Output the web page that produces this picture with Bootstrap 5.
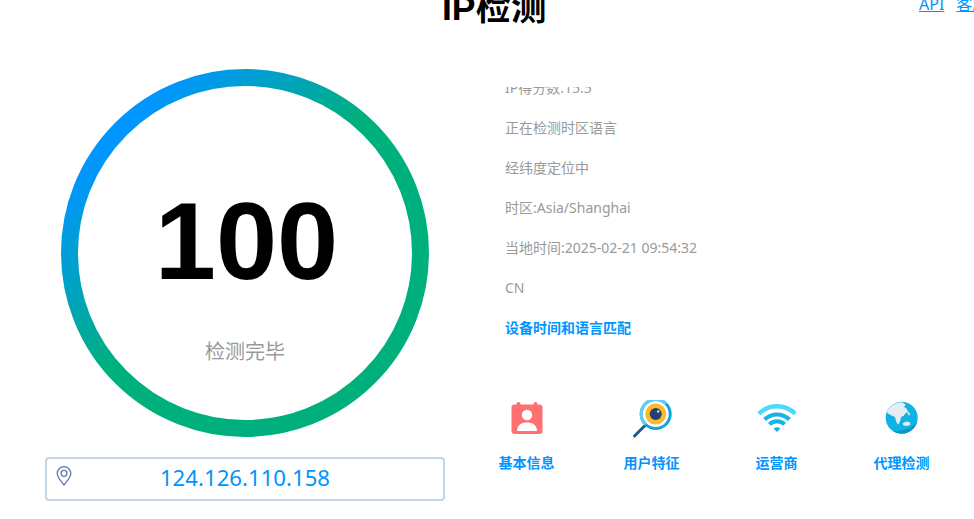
<!DOCTYPE html>
<html lang="zh-CN">
<head>
  <meta charset="UTF-8">
  <title>IP检测</title>
  <meta name="viewport" content="width=device-width, initial-scale=1">
  <link href="https://cdn.jsdelivr.net/npm/bootstrap@5.3.0/dist/css/bootstrap.min.css" rel="stylesheet">
  <style>
    html, body {
      height: 519px;
      overflow: hidden;
    }

    body {
      background: #fff;
      font-family: "Noto Sans", "Noto Sans CJK SC", sans-serif;
    }

    .page-head {
      height: 69px;
      margin-top: -12px;
      white-space: nowrap;
    }

    .page-title {
      margin: 0 0 0 442px;
      width: 104px;
      font-family: "Liberation Sans", "Noto Sans CJK SC", sans-serif;
      font-size: 35.5px;
      line-height: 40px;
      font-weight: 700;
      color: #000;
      flex-shrink: 0;
    }

    .head-links {
      margin-left: 373px;
      padding-top: 5px;
      gap: 12px;
      flex-shrink: 0;
    }

    .head-links a {
      font-size: 16px;
      line-height: 22px;
      color: #0094ff;
    }

    .left-col {
      width: 490px;
      padding-top: 12px;
      flex-shrink: 0;
    }

    .ring-wrap {
      width: 368px;
      height: 368px;
      margin-left: 61px;
      padding-top: 118px;
    }

    .ring-svg {
      position: absolute;
      top: 0;
      left: 0;
    }

    .score-num {
      font-family: "Liberation Sans", sans-serif;
      font-size: 110px;
      line-height: 108px;
      font-weight: 700;
      color: #000;
      padding-left: 3px;
    }

    .score-text {
      font-family: "Noto Sans CJK SC", sans-serif;
      font-size: 20px;
      line-height: 28px;
      color: #999;
      margin-top: 42px;
    }

    .ip-box {
      width: 400px;
      height: 44px;
      margin: 20px 0 0 45px;
      border: 2px solid #c3d3e8;
      border-radius: 4px;
    }

    .ip-pin {
      position: absolute;
      left: 9px;
      top: 7px;
    }

    .ip-text {
      font-size: 22.2px;
      line-height: 38px;
      color: #0094ff;
    }

    .log-box {
      height: 267px;
      margin-top: 30px;
      padding-left: 15px;
      overflow: hidden;
    }

    .log-list {
      margin-top: -9px;
      font-size: 14px;
      line-height: 20px;
      color: #999;
    }

    .log-list div {
      margin-bottom: 20px;
    }

    .log-list .log-ok {
      color: #0094ff;
      font-weight: 700;
    }

    .tool-row {
      width: 500px;
      margin: 46px 0 0 -26px;
    }

    .tool-item {
      width: 125px;
      text-align: center;
      font-size: 14px;
      line-height: 20px;
      font-weight: 700;
      color: #0094ff;
    }

    .tool-item svg {
      display: block;
      margin: 0 auto 13px;
    }
  </style>
</head>
<body>

  <header class="page-head d-flex">
    <h1 class="page-title">IP检测</h1>
    <div class="head-links d-flex">
      <a href="#">API</a>
      <a href="#">客服</a>
    </div>
  </header>

  <main class="d-flex">
    <!-- score -->
    <section class="left-col">
      <div class="ring-wrap position-relative text-center">
        <svg class="ring-svg" width="368" height="368" viewBox="0 0 368 368">
          <defs>
            <linearGradient id="ringGrad" x1="0.15" y1="0.15" x2="0.47" y2="0.47">
              <stop offset="0" stop-color="#0096ff"/>
              <stop offset="1" stop-color="#00b07c"/>
            </linearGradient>
          </defs>
          <circle cx="184" cy="184" r="175.500" fill="none" stroke="url(#ringGrad)" stroke-width="17"/>
        </svg>
        <div class="position-relative">
          <div class="score-num">100</div>
          <div class="score-text">检测完毕</div>
        </div>
      </div>
      <div class="ip-box position-relative text-center">
        <svg class="ip-pin" width="16" height="20" viewBox="0 0 16 20">
          <path d="M8 19C5 15 1.200 11.500 1.200 7.500a6.800 6.800 0 0 1 13.600 0C14.800 11.500 11 15 8 19z" fill="none" stroke="#5d7ea8" stroke-width="1.300"/>
          <circle cx="8" cy="7.300" r="3" fill="none" stroke="#5d7ea8" stroke-width="1.300"/>
        </svg>
        <span class="ip-text">124.126.110.158</span>
      </div>
    </section>

    <!-- detection log and tools -->
    <section>
      <div class="log-box">
        <div class="log-list">
          <div>IP得分数:15.5</div>
          <div>正在检测时区语言</div>
          <div>经纬度定位中</div>
          <div>时区:Asia/Shanghai</div>
          <div>当地时间:2025-02-21 09:54:32</div>
          <div>CN</div>
          <div class="log-ok">设备时间和语言匹配</div>
        </div>
      </div>
      <div class="tool-row d-flex">
        <div class="tool-item">
          <svg width="40" height="40" viewBox="0 0 40 40">
            <rect x="4.500" y="4.500" width="31" height="29.500" rx="3" fill="#ff7070"/>
            <rect x="9.500" y="2" width="4" height="6" rx="2" fill="#ff7070"/>
            <rect x="26.500" y="2" width="4" height="6" rx="2" fill="#ff7070"/>
            <circle cx="20" cy="15" r="5.200" fill="#fff"/>
            <path d="M10 31c0-6 4.500-8.500 10-8.500s10 2.500 10 8.500z" fill="#fff"/>
          </svg>
          基本信息
        </div>
        <div class="tool-item">
          <svg width="40" height="40" viewBox="0 0 40 40">
            <path d="M13 25.500 2.500 36" stroke="#1b5a8c" stroke-width="3" stroke-linecap="round"/>
            <circle cx="23.700" cy="14" r="14.500" fill="none" stroke="#12a5d8" stroke-width="3"/>
            <path d="M13.400 24.300A14.500 14.500 0 0 1 34 3.700" fill="none" stroke="#66cdf0" stroke-width="3"/>
            <circle cx="23.700" cy="14" r="10.500" fill="#ffb92e"/>
            <circle cx="23.700" cy="14" r="6" fill="#27406f"/>
            <circle cx="26.200" cy="11.500" r="1.300" fill="#c9d6ea"/>
          </svg>
          用户特征
        </div>
        <div class="tool-item">
          <svg width="40" height="40" viewBox="0 0 40 40">
            <path d="M1.800 13.800a25.700 25.700 0 0 1 36.400 0" fill="none" stroke="#4fd8ff" stroke-width="4.400"/>
            <path d="M7.600 19.600a17.600 17.600 0 0 1 24.800 0" fill="none" stroke="#14b4ea" stroke-width="4.200"/>
            <path d="M12.400 24.400a10.700 10.700 0 0 1 15.200 0" fill="none" stroke="#14b4ea" stroke-width="4"/>
            <path d="M16.700 28.700a4.700 4.700 0 0 1 6.600 0L20 32z" fill="#14b4ea"/>
          </svg>
          运营商
        </div>
        <div class="tool-item">
          <svg width="40" height="40" viewBox="0 0 40 40">
            <circle cx="19.700" cy="17.700" r="16" fill="#0fb2e4"/>
            <path d="M35 22.500A16 16 0 0 1 11 31c9 .5 18-2.500 24-8.500z" fill="#0a94c8"/>
            <path d="M5.500 10.500C8.500 5.500 13 2.500 19 2.200c2.500.3 3.800 1.300 4.500 2.800l-1.500 2 2.500 1.500 2 4-3 .5-2 3-2.500 1-.5 3-1.500 3.500-1.500 1-1.500-3.500-1-4-3.500-1.500-3.500-2-1-1.500z" fill="#e4eef2"/>
            <path d="M20.500 23.500l3.500-2 3.500.5 1 2.500-3 1.500-4-.5z" fill="#e4eef2"/>
            <path d="M26 12l2 1.500-.5 2-1.800-1z" fill="#e4eef2"/>
          </svg>
          代理检测
        </div>
      </div>
    </section>
  </main>

</body>
</html>
